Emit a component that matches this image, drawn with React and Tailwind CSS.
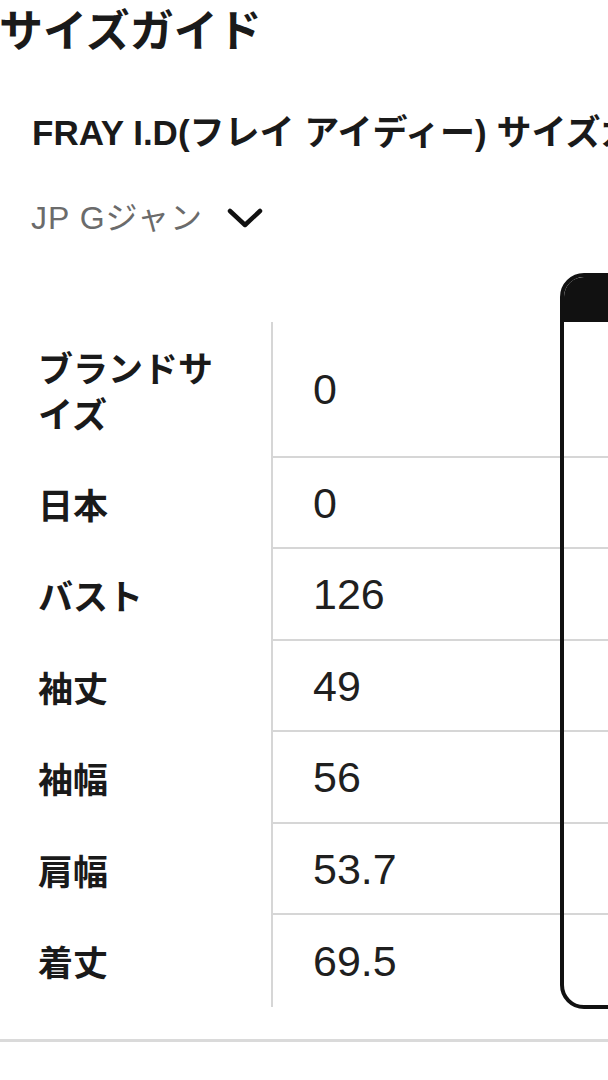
import React from "react";

const rows = [
  { label: "ブランドサイズ", value: "0", h: "h-[136px]" },
  { label: "日本", value: "0", h: "h-[91px]" },
  { label: "バスト", value: "126", h: "h-[92px]" },
  { label: "袖丈", value: "49", h: "h-[91px]" },
  { label: "袖幅", value: "56", h: "h-[92px]" },
  { label: "肩幅", value: "53.7", h: "h-[91px]" },
  { label: "着丈", value: "69.5", h: "h-[92px]" },
];

const cjk = { fontFamily: '"Noto Sans CJK JP", "Noto Sans", sans-serif' };
const mixed = { fontFamily: '"Liberation Sans", "Noto Sans CJK JP", sans-serif' };

export default function App() {
  return (
    <div className="w-[608px] h-[1080px] overflow-hidden bg-white text-[#1a1a1a]" style={cjk}>
      <h1 className="text-[44px] font-bold leading-[56px] -ml-[1px] whitespace-nowrap">サイズガイド</h1>
      <h2 className="mt-[55px] ml-[32px] text-[35px] font-bold leading-[44px] whitespace-nowrap" style={mixed}>
        FRAY I.D(フレイ アイディー) サイズガイド
      </h2>
      <div className="mt-[43px] ml-[31px] flex items-center gap-[24px]">
        <span className="text-[32px] leading-[40px] text-[#6b6b6b] tracking-[1px]" style={mixed}>
          JP Gジャン
        </span>
        <svg width="36" height="22" viewBox="0 0 36 22" fill="none">
          <path d="M3 4 L18 18 L33 4" stroke="#111" strokeWidth="4.5" strokeLinecap="round" strokeLinejoin="round" />
        </svg>
      </div>
      <div className="mt-[35px] flex items-start">
        <div className="w-[273px] mt-[49px] border-r-2 border-[#d6d6d6] shrink-0">
          {rows.map((r, i) => (
            <div key={i} className={`${r.h} flex items-center pl-[38px] pr-[44px]`}>
              <span className="text-[35px] font-bold leading-[46px]">{r.label}</span>
            </div>
          ))}
        </div>
        <div className="w-[287px] mt-[49px] shrink-0">
          {rows.map((r, i) => (
            <div
              key={i}
              className={`${r.h} flex items-center pl-[40px] ${i < rows.length - 1 ? "border-b-2 border-[#d6d6d6]" : ""}`}
            >
              <span className="text-[43px] leading-[48px] text-[#1f1f1f]" style={mixed}>
                {r.value}
              </span>
            </div>
          ))}
        </div>
        <div className="w-[200px] shrink-0 border-4 border-[#111] rounded-[24px] overflow-hidden">
          <div className="h-[45px] bg-[#111]" />
          {rows.map((r, i) => (
            <div
              key={i}
              className={`${i === rows.length - 1 ? "h-[90px]" : r.h} ${i < rows.length - 1 ? "border-b-2 border-[#d6d6d6]" : ""}`}
            />
          ))}
        </div>
      </div>
      <div className="mt-[30px] h-[3px] bg-[#dadada]" />
    </div>
  );
}
